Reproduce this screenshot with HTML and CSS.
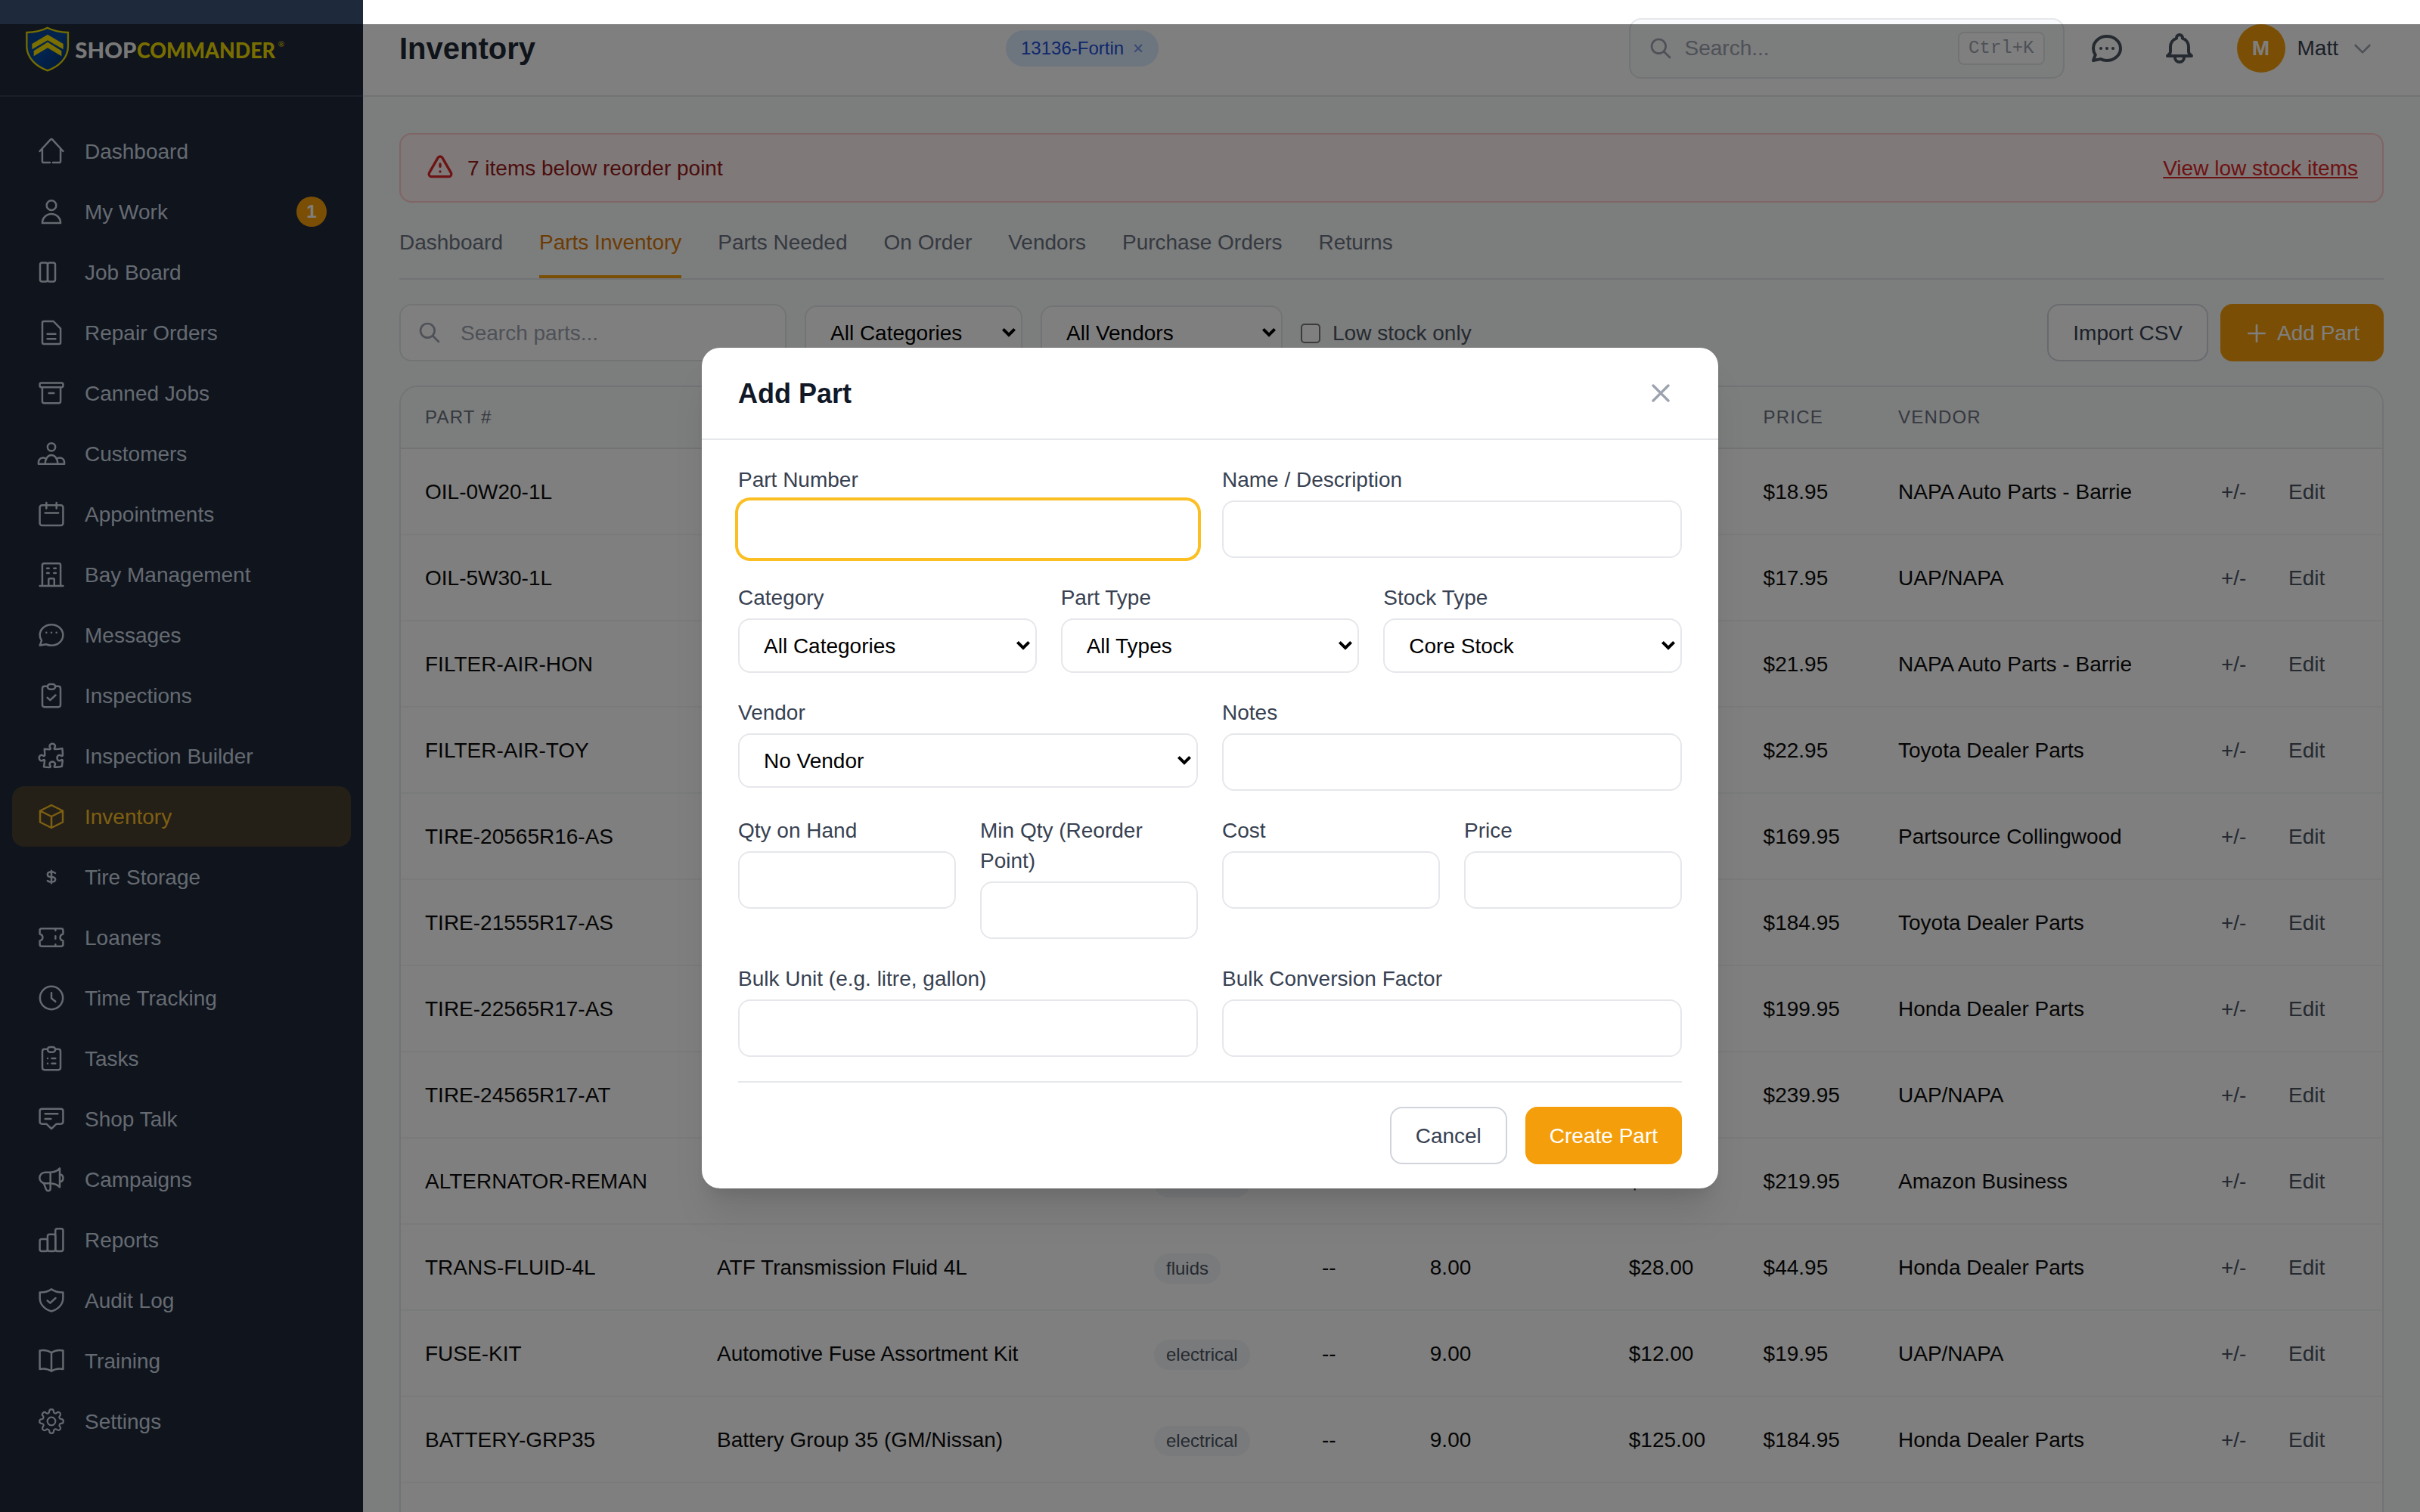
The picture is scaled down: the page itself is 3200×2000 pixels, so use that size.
FILE: index.html
```html
<!DOCTYPE html>
<html lang="en">
<head>
    <meta charset="UTF-8">
    <meta name="viewport" content="width=device-width, initial-scale=1.0">
    <title>Inventory - ShopCommander</title>
    <link rel="stylesheet" href="styles.css">
</head>
<body>
    <div class="app">
        <aside class="sidebar">
            <div class="brand">
                <svg class="brand__logo" viewBox="36 0 1044 252">
                    <defs>
                        <linearGradient id="shield" x1="0" y1="0" x2="1" y2="1">
                            <stop offset="0" stop-color="#0a3f8f"/>
                            <stop offset="0.5" stop-color="#04489f"/>
                            <stop offset="1" stop-color="#052b63"/>
                        </linearGradient>
                    </defs>
                    <path d="M128 38C104 51 76 56 46 57V112C46 158 84 192 129 208C174 192 210 158 210 112V57C180 56 152 51 128 38Z" fill="url(#shield)" stroke="#e8d800" stroke-width="7"/>
                    <path d="M129 65L191 102V124L129 88L67 124V102Z" fill="#f5df00"/>
                    <path d="M129 95L184 130V151L129 118L74 151V130Z" fill="#f5df00"/>
                    <text class="brand__shop" x="238" y="158" textLength="243" lengthAdjust="spacingAndGlyphs">SHOP</text>
                    <text class="brand__commander" x="483" y="158" textLength="549" lengthAdjust="spacingAndGlyphs">COMMANDER</text>
                    <text class="brand__reg" x="1043" y="115">®</text>
                </svg>
            </div>
            <nav class="nav">
                <a class="nav__item"><svg class="icon" viewBox="0 0 24 24"><path d="M2.75 12l8.5-9.2c.4-.45 1.1-.45 1.5 0l8.5 9.2M4.75 10v9.9c0 .6.5 1.1 1.1 1.1H10.8m2.4 0h4.95c.6 0 1.1-.5 1.1-1.1V10"/></svg>Dashboard</a>
                <a class="nav__item"><svg class="icon" viewBox="0 0 24 24"><circle cx="12" cy="7" r="3.8"/><path d="M4.75 21c0-4 3.2-7.2 7.25-7.2s7.25 3.2 7.25 7.2z"/></svg>My Work<span class="nav__badge">1</span></a>
                <a class="nav__item"><svg class="icon" viewBox="0 0 24 24"><rect x="3" y="4.5" width="6" height="15" rx="1.6"/><rect x="9" y="4.5" width="6" height="15" rx="1.6"/></svg>Job Board</a>
                <a class="nav__item"><svg class="icon" viewBox="0 0 24 24"><path d="M6 3h7.6l5.65 5.8v11c0 .7-.5 1.2-1.2 1.2H6c-.7 0-1.2-.5-1.2-1.2V4.2C4.8 3.5 5.3 3 6 3zM8.75 13h6.5m-6.5 3.9h6.5"/></svg>Repair Orders</a>
                <a class="nav__item"><svg class="icon" viewBox="0 0 24 24"><rect x="2.75" y="3.9" width="18.5" height="3.4" rx="1.1"/><path d="M4.75 7.3v11.2c0 .9.6 1.5 1.5 1.5h11.5c.9 0 1.5-.6 1.5-1.5V7.3M10 12h4"/></svg>Canned Jobs</a>
                <a class="nav__item"><svg class="icon" viewBox="0 0 24 24"><circle cx="12" cy="6.8" r="3.1"/><path d="M7 20.25c0-4 2-7 5-7s5 3 5 7M1.75 20.25v-1.2c0-2.3 1.7-3.8 3.7-3.8.9 0 1.6.2 2.3.8M22.25 20.25v-1.2c0-2.3-1.7-3.8-3.7-3.8-.9 0-1.6.2-2.3.8M1.75 20.25h20.5"/></svg>Customers</a>
                <a class="nav__item"><svg class="icon" viewBox="0 0 24 24"><rect x="2.75" y="5" width="18.5" height="16" rx="1.8"/><path d="M8 3v4.5M16 3v4.5M7 11.1h10.5"/></svg>Appointments</a>
                <a class="nav__item"><svg class="icon" viewBox="0 0 24 24"><path d="M2.75 21h18.5M4.75 21V4.6c0-.8.6-1.4 1.4-1.4h11.7c.8 0 1.4.6 1.4 1.4V21M9.75 21v-5.1c0-.4.3-.8.8-.8h2.9c.5 0 .8.4.8.8V21M8.5 7.1h1.5m4 0h1.5m-7 3.7h1.5m4 0h1.5"/></svg>Bay Management</a>
                <a class="nav__item"><svg class="icon" viewBox="0 0 24 24"><path d="M8 10h.01M12 10h.01M16 10h.01M21.2 12c0 4.6-4.1 8.3-9.2 8.3a9.863 9.863 0 01-4.255-.949L2.8 20.3l1.395-3.9C3.3 15.1 2.8 13.6 2.8 12c0-4.6 4.1-8.3 9.2-8.3s9.2 3.7 9.2 8.3z"/></svg>Messages</a>
                <a class="nav__item"><svg class="icon" viewBox="0 0 24 24"><path d="M9 4.7H6.5c-1 0-1.7.7-1.7 1.7v13c0 1 .7 1.7 1.7 1.7h11c1 0 1.7-.7 1.7-1.7v-13c0-1-.7-1.7-1.7-1.7H15"/><rect x="8.9" y="3" width="6.2" height="4" rx="2"/><path d="M8.8 13.7l2.2 2 4.3-4"/></svg>Inspections</a>
                <a class="nav__item"><svg class="icon" viewBox="0 0 24 24"><path d="M14.25 6.087c0-.355.186-.676.401-.959.221-.29.349-.634.349-1.003 0-1.036-1.007-1.875-2.25-1.875s-2.25.84-2.25 1.875c0 .369.128.713.349 1.003.215.283.401.604.401.959v0a.64.64 0 0 1-.657.643 48.39 48.39 0 0 1-4.163-.3c.186 1.613.293 3.25.315 4.907a.656.656 0 0 1-.658.663v0c-.355 0-.676-.186-.959-.401a1.647 1.647 0 0 0-1.003-.349c-1.036 0-1.875 1.007-1.875 2.25s.84 2.25 1.875 2.25c.369 0 .713-.128 1.003-.349.283-.215.604-.401.959-.401v0c.31 0 .555.26.532.57a48.039 48.039 0 0 1-.642 5.056c1.518.19 3.058.309 4.616.354a.64.64 0 0 0 .657-.643v0c0-.355-.186-.676-.401-.959a1.647 1.647 0 0 1-.349-1.003c0-1.035 1.008-1.875 2.25-1.875 1.243 0 2.25.84 2.25 1.875 0 .369-.128.713-.349 1.003-.215.283-.4.604-.4.959v0c0 .333.277.599.61.58a48.1 48.1 0 0 0 5.427-.63 48.05 48.05 0 0 0 .582-4.717.532.532 0 0 0-.533-.57v0c-.355 0-.676.186-.959.401-.29.221-.634.349-1.003.349-1.035 0-1.875-1.007-1.875-2.25s.84-2.25 1.875-2.25c.37 0 .713.128 1.003.349.283.215.604.401.96.401v0a.656.656 0 0 0 .658-.663 48.422 48.422 0 0 0-.37-5.36c-1.886.342-3.81.574-5.766.689a.578.578 0 0 1-.61-.58v0Z"/></svg>Inspection Builder</a>
                <a class="nav__item active"><svg class="icon" viewBox="0 0 24 24"><path d="m21 7.5-9-4.5L3 7.5m18 0-9 4.5m9-4.5v9L12 21M3 7.5l9 4.5M3 7.5v9l9 4.5m0-9v9"/></svg>Inventory</a>
                <a class="nav__item"><svg class="icon" viewBox="0 0 24 24"><path d="M12 7v10M15 8.9c-.7-.6-1.8-.9-3-.9-1.8 0-3.1.8-3.1 2s1.3 2 3.1 2 3.1.8 3.1 2-1.3 2-3.1 2c-1.2 0-2.4-.4-3.1-1"/></svg>Tire Storage</a>
                <a class="nav__item"><svg class="icon" viewBox="0 0 24 24"><path d="M15.2 5v1.5m0 4.5v2m0 4.5V19M4.2 5c-.8 0-1.45.6-1.45 1.4v2.9c1.5.4 2.3 1.4 2.3 2.7s-.8 2.3-2.3 2.7v2.9c0 .8.65 1.4 1.45 1.4h15.6c.8 0 1.45-.6 1.45-1.4v-2.9c-1.5-.4-2.3-1.4-2.3-2.7s.8-2.3 2.3-2.7V6.4c0-.8-.65-1.4-1.45-1.4z"/></svg>Loaners</a>
                <a class="nav__item"><svg class="icon" viewBox="0 0 24 24"><circle cx="12" cy="12" r="9.1"/><path d="M12 8v4.3l3.2 2.6"/></svg>Time Tracking</a>
                <a class="nav__item"><svg class="icon" viewBox="0 0 24 24"><path d="M9 4.7H6.5c-1 0-1.7.7-1.7 1.7v13c0 1 .7 1.7 1.7 1.7h11c1 0 1.7-.7 1.7-1.7v-13c0-1-.7-1.7-1.7-1.7H15"/><rect x="8.9" y="3" width="6.2" height="4" rx="2"/><path d="M9 12h.01M12.3 12h2.9M9 16.1h.01M12.3 16.1h2.9"/></svg>Tasks</a>
                <a class="nav__item"><svg class="icon" viewBox="0 0 24 24"><path d="M8 16H4.6c-1.1 0-1.85-.7-1.85-1.7V5.7C2.75 4.6 3.5 4 4.6 4h14.8c1.1 0 1.85.6 1.85 1.7v8.6c0 1-.75 1.7-1.85 1.7H16l-4 3.8zM7 8h10M7 12h4.6"/></svg>Shop Talk</a>
                <a class="nav__item"><svg class="icon" viewBox="0 0 24 24"><path d="M11.2 6.4H7a4.2 4.2 0 0 0 0 8.8h4.2zM11.2 6.4c2.9-.1 5.4-1 7.4-3.2v15c-2-2-4.5-2.9-7.4-3M18.6 7.9c1.5.2 2.7 1.4 2.7 3.1s-1.2 2.9-2.7 3.1M5.9 15.2l1.9 4.7c.4.9.9 1.2 1.7 1.2 1.1 0 1.7-.6 1.7-1.7v-4.2"/></svg>Campaigns</a>
                <a class="nav__item"><svg class="icon" viewBox="0 0 24 24"><rect x="2.75" y="11.4" width="6.2" height="9.6" rx="1.5"/><rect x="8.95" y="7.7" width="6.2" height="13.3" rx="1.5"/><rect x="15.15" y="3.1" width="6.1" height="17.9" rx="1.5"/></svg>Reports</a>
                <a class="nav__item"><svg class="icon" viewBox="0 0 24 24"><path d="M12 3.1c2.2 1.7 5.3 2.7 9.2 2.6v4.6c0 4.9-3.9 9-9.2 10.4-5.3-1.4-9.2-5.5-9.2-10.4V5.7c3.9.1 7-.9 9.2-2.6zM8.8 12.2l2.2 2 4.3-4"/></svg>Audit Log</a>
                <a class="nav__item"><svg class="icon" viewBox="0 0 24 24"><path d="M12 5.6C9 3.5 6 3.2 2.75 3.9v14.7C6 17.9 9 18.2 12 20.3M12 5.6c3-2.1 6-2.4 9.25-1.7v14.7c-3.25-.7-6.25-.4-9.25 1.7M12 5.6v14.7"/></svg>Training</a>
                <a class="nav__item"><svg class="icon" viewBox="-1.9 -1.9 27.8 27.8"><circle cx="12" cy="12" r="3.7"/><path d="M19.4 15a1.65 1.65 0 0 0 .33 1.82l.06.06a2 2 0 1 1-2.83 2.83l-.06-.06a1.65 1.65 0 0 0-1.82-.33 1.65 1.65 0 0 0-1 1.51V21a2 2 0 0 1-4 0v-.09A1.65 1.65 0 0 0 9 19.4a1.65 1.65 0 0 0-1.82.33l-.06.06a2 2 0 1 1-2.83-2.83l.06-.06a1.65 1.65 0 0 0 .33-1.82 1.65 1.65 0 0 0-1.51-1H3a2 2 0 0 1 0-4h.09A1.65 1.65 0 0 0 4.6 9a1.65 1.65 0 0 0-.33-1.82l-.06-.06a2 2 0 1 1 2.83-2.83l.06.06a1.65 1.65 0 0 0 1.82.33H9a1.65 1.65 0 0 0 1-1.51V3a2 2 0 0 1 4 0v.09a1.65 1.65 0 0 0 1 1.51 1.65 1.65 0 0 0 1.82-.33l.06-.06a2 2 0 1 1 2.83 2.83l-.06.06a1.65 1.65 0 0 0-.33 1.82V9a1.65 1.65 0 0 0 1.51 1H21a2 2 0 0 1 0 4h-.09a1.65 1.65 0 0 0-1.51 1z"/></svg>Settings</a>
            </nav>
        </aside>

        <div class="page">
            <header class="topbar">
                <h1 class="topbar__title">Inventory</h1>
                <span class="chip">13136-Fortin <span class="chip__close">×</span></span>
                <div class="topbar__right">
                    <div class="search">
                        <svg class="icon icon--sm" viewBox="0 0 24 24"><path d="M21 21l-6-6m2-5a7 7 0 11-14 0 7 7 0 0114 0z"/></svg>
                        <span>Search...</span>
                        <kbd>Ctrl+K</kbd>
                    </div>
                    <button class="icon-btn"><svg class="icon icon--lg" viewBox="0 0 24 24"><path d="M8 12h.01M12 12h.01M16 12h.01M21 12c0 4.418-4.03 8-9 8a9.863 9.863 0 01-4.255-.949L3 20l1.395-3.72C3.512 15.042 3 13.574 3 12c0-4.418 4.03-8 9-8s9 3.582 9 8z"/></svg></button>
                    <button class="icon-btn"><svg class="icon icon--lg" viewBox="0 0 24 24"><path d="M15 17h5l-1.405-1.405A2.032 2.032 0 0118 14.158V11a6.002 6.002 0 00-4-5.659V5a2 2 0 10-4 0v.341C7.67 6.165 6 8.388 6 11v3.159c0 .538-.214 1.055-.595 1.436L4 17h5m6 0v1a3 3 0 11-6 0v-1m6 0H9"/></svg></button>
                    <div class="user">
                        <span class="avatar">M</span>
                        <span>Matt</span>
                        <svg class="icon icon--sm" viewBox="0 0 24 24"><path d="M19 9l-7 7-7-7"/></svg>
                    </div>
                </div>
            </header>

            <main class="content">
                <div class="alert">
                    <svg class="icon icon--alert" viewBox="0 0 24 24"><path d="M12 9v2m0 4h.01m-6.938 4h13.856c1.54 0 2.502-1.667 1.732-3L13.732 4c-.77-1.333-2.694-1.333-3.464 0L3.34 16c-.77 1.333.192 3 1.732 3z"/></svg>
                    <span>7 items below reorder point</span>
                    <a class="alert__link">View low stock items</a>
                </div>

                <div class="tabs">
                    <a class="tab">Dashboard</a>
                    <a class="tab active">Parts Inventory</a>
                    <a class="tab">Parts Needed</a>
                    <a class="tab">On Order</a>
                    <a class="tab">Vendors</a>
                    <a class="tab">Purchase Orders</a>
                    <a class="tab">Returns</a>
                </div>

                <div class="toolbar">
                    <div class="toolbar__search">
                        <svg class="icon icon--sm" viewBox="0 0 24 24"><path d="M21 21l-6-6m2-5a7 7 0 11-14 0 7 7 0 0114 0z"/></svg>
                        <span>Search parts...</span>
                    </div>
                    <select class="select select--category"><option>All Categories</option></select>
                    <select class="select select--vendor"><option>All Vendors</option></select>
                    <label class="check"><input type="checkbox"> Low stock only</label>
                    <div class="toolbar__actions">
                        <button class="btn">Import CSV</button>
                        <button class="btn btn--primary"><svg class="icon icon--sm" viewBox="0 0 24 24"><path d="M12 4v16m8-8H4"/></svg>Add Part</button>
                    </div>
                </div>

                <div class="card">
                    <table class="table">
                        <colgroup>
                            <col class="col-part"><col class="col-name"><col class="col-cat"><col class="col-bin"><col class="col-qty">
                            <col class="col-cost"><col class="col-price"><col class="col-vendor"><col class="col-adjust"><col>
                        </colgroup>
                        <thead>
                            <tr><th>Part #</th><th>Name</th><th>Category</th><th>Bin</th><th>On Hand</th><th>Cost</th><th>Price</th><th>Vendor</th><th></th><th></th></tr>
                        </thead>
                        <tbody>
                            <tr><td>OIL-0W20-1L</td><td>Engine Oil 0W20 1L</td><td><span class="pill">fluids</span></td><td>--</td><td>24.00</td><td>$9.50</td><td>$18.95</td><td>NAPA Auto Parts - Barrie</td><td class="action">+/-</td><td class="action">Edit</td></tr>
                            <tr><td>OIL-5W30-1L</td><td>Engine Oil 5W30 1L</td><td><span class="pill">fluids</span></td><td>--</td><td>24.00</td><td>$8.95</td><td>$17.95</td><td>UAP/NAPA</td><td class="action">+/-</td><td class="action">Edit</td></tr>
                            <tr><td>FILTER-AIR-HON</td><td>Air Filter Honda</td><td><span class="pill">filters</span></td><td>--</td><td>6.00</td><td>$11.50</td><td>$21.95</td><td>NAPA Auto Parts - Barrie</td><td class="action">+/-</td><td class="action">Edit</td></tr>
                            <tr><td>FILTER-AIR-TOY</td><td>Air Filter Toyota</td><td><span class="pill">filters</span></td><td>--</td><td>6.00</td><td>$12.00</td><td>$22.95</td><td>Toyota Dealer Parts</td><td class="action">+/-</td><td class="action">Edit</td></tr>
                            <tr><td>TIRE-20565R16-AS</td><td>All Season 205/65R16</td><td><span class="pill">tires</span></td><td>--</td><td>8.00</td><td>$110.00</td><td>$169.95</td><td>Partsource Collingwood</td><td class="action">+/-</td><td class="action">Edit</td></tr>
                            <tr><td>TIRE-21555R17-AS</td><td>All Season 215/55R17</td><td><span class="pill">tires</span></td><td>--</td><td>8.00</td><td>$120.00</td><td>$184.95</td><td>Toyota Dealer Parts</td><td class="action">+/-</td><td class="action">Edit</td></tr>
                            <tr><td>TIRE-22565R17-AS</td><td>All Season 225/65R17</td><td><span class="pill">tires</span></td><td>--</td><td>8.00</td><td>$130.00</td><td>$199.95</td><td>Honda Dealer Parts</td><td class="action">+/-</td><td class="action">Edit</td></tr>
                            <tr><td>TIRE-24565R17-AT</td><td>All Terrain 245/65R17</td><td><span class="pill">tires</span></td><td>--</td><td>8.00</td><td>$160.00</td><td>$239.95</td><td>UAP/NAPA</td><td class="action">+/-</td><td class="action">Edit</td></tr>
                            <tr><td>ALTERNATOR-REMAN</td><td>Alternator Remanufactured</td><td><span class="pill">electrical</span></td><td>--</td><td>1.00<svg class="icon icon--low" viewBox="0 0 24 24"><path d="M12 9v2m0 4h.01m-6.938 4h13.856c1.54 0 2.502-1.667 1.732-3L13.732 4c-.77-1.333-2.694-1.333-3.464 0L3.34 16c-.77 1.333.192 3 1.732 3z"/></svg></td><td>$145.00</td><td>$219.95</td><td>Amazon Business</td><td class="action">+/-</td><td class="action">Edit</td></tr>
                            <tr><td>TRANS-FLUID-4L</td><td>ATF Transmission Fluid 4L</td><td><span class="pill">fluids</span></td><td>--</td><td>8.00</td><td>$28.00</td><td>$44.95</td><td>Honda Dealer Parts</td><td class="action">+/-</td><td class="action">Edit</td></tr>
                            <tr><td>FUSE-KIT</td><td>Automotive Fuse Assortment Kit</td><td><span class="pill">electrical</span></td><td>--</td><td>9.00</td><td>$12.00</td><td>$19.95</td><td>UAP/NAPA</td><td class="action">+/-</td><td class="action">Edit</td></tr>
                            <tr><td>BATTERY-GRP35</td><td>Battery Group 35 (GM/Nissan)</td><td><span class="pill">electrical</span></td><td>--</td><td>9.00</td><td>$125.00</td><td>$184.95</td><td>Honda Dealer Parts</td><td class="action">+/-</td><td class="action">Edit</td></tr>
                            <tr><td></td><td></td><td></td><td></td><td></td><td></td><td></td><td></td><td></td><td></td></tr>
                        </tbody>
                    </table>
                </div>
            </main>
        </div>
    </div>

    <div class="overlay">
        <div class="modal">
            <div class="modal__header">
                <h2>Add Part</h2>
                <button class="modal__close"><svg class="icon icon--close" viewBox="0 0 24 24"><path d="M6 18L18 6M6 6l12 12"/></svg></button>
            </div>
            <form class="modal__body">
                <div class="row row--2">
                    <div class="field"><label>Part Number</label><input class="input input--focus" type="text"></div>
                    <div class="field"><label>Name / Description</label><input class="input" type="text"></div>
                </div>
                <div class="row row--3">
                    <div class="field"><label>Category</label><select class="select"><option>All Categories</option></select></div>
                    <div class="field"><label>Part Type</label><select class="select"><option>All Types</option></select></div>
                    <div class="field"><label>Stock Type</label><select class="select"><option>Core Stock</option></select></div>
                </div>
                <div class="row row--2">
                    <div class="field"><label>Vendor</label><select class="select"><option>No Vendor</option></select></div>
                    <div class="field"><label>Notes</label><input class="input" type="text"></div>
                </div>
                <div class="row row--4">
                    <div class="field"><label>Qty on Hand</label><input class="input" type="text"></div>
                    <div class="field"><label>Min Qty (Reorder Point)</label><input class="input" type="text"></div>
                    <div class="field"><label>Cost</label><input class="input" type="text"></div>
                    <div class="field"><label>Price</label><input class="input" type="text"></div>
                </div>
                <div class="row row--2">
                    <div class="field"><label>Bulk Unit (e.g. litre, gallon)</label><input class="input" type="text"></div>
                    <div class="field"><label>Bulk Conversion Factor</label><input class="input" type="text"></div>
                </div>
                <div class="modal__footer">
                    <button class="btn" type="button">Cancel</button>
                    <button class="btn btn--primary" type="button">Create Part</button>
                </div>
            </form>
        </div>
    </div>
</body>
</html>
```

FILE: styles.css
```css
* {
    box-sizing: border-box;
}

/* everything is sized for a 1600x1000 screen */
html {
    zoom: 2;
}

body {
    position: relative;
    width: 1600px;
    height: 1000px;
    margin: 0;
    overflow: hidden;
    font-family: "Liberation Sans", Arial, sans-serif;
    font-size: 14px;
    line-height: 20px;
    color: #0a0a0a;
    background: #f9fafb;
}

button,
input,
select {
    font-family: inherit;
    font-size: 14px;
}

h1,
h2 {
    margin: 0;
}

.app {
    display: flex;
    height: 1000px;
    overflow: hidden;
}

.icon {
    width: 20px;
    height: 20px;
    flex-shrink: 0;
    fill: none;
    stroke: currentColor;
    stroke-width: 1.5;
    stroke-linecap: round;
    stroke-linejoin: round;
}

.icon--sm {
    width: 16px;
    height: 16px;
    stroke-width: 2;
}

.icon--lg {
    width: 24px;
    height: 24px;
    stroke-width: 2;
}

/* Sidebar */
.sidebar {
    width: 240px;
    flex-shrink: 0;
    background: #1e293b;
    color: #cbd5e1;
}

.brand {
    display: flex;
    align-items: center;
    height: 64px;
    padding: 3px 16px 0;
    border-bottom: 1px solid #334155;
}

.brand__logo {
    width: 174px;
    height: 42px;
}

.brand__shop,
.brand__commander {
    font-family: Lato, sans-serif;
    font-size: 88px;
    font-weight: 900;
    fill: #f1f1f1;
}

.brand__commander {
    fill: #f0dc00;
}

.brand__reg {
    font-family: Lato, sans-serif;
    font-size: 30px;
    fill: #f0dc00;
}

.nav {
    padding: 16px 8px;
}

.nav__item {
    display: flex;
    align-items: center;
    gap: 12px;
    height: 40px;
    padding: 1px 16px 0;
    border-radius: 8px;
}

.nav__item .icon {
    margin-top: -1px;
}

.nav__item.active {
    background: rgba(245, 158, 11, 0.2);
    color: #fbbf24;
}

.nav__badge {
    width: 20px;
    height: 20px;
    margin-top: -1px;
    margin-left: auto;
    border-radius: 50%;
    background: #f59e0b;
    color: #fff;
    font-size: 12px;
    font-weight: bold;
    text-align: center;
}

/* Top bar */
.page {
    flex: 1;
    min-width: 0;
}

.topbar {
    display: flex;
    align-items: center;
    height: 64px;
    padding: 1px 24px 0;
    background: #fff;
    border-bottom: 1px solid #e5e7eb;
}

.topbar__title {
    width: 401px;
    font-size: 20px;
    line-height: 28px;
    color: #1f2937;
}

.chip {
    display: flex;
    gap: 6px;
    height: 24px;
    padding: 4px 10px;
    border-radius: 12px;
    background: #dbeafe;
    color: #1d4ed8;
    font-size: 12px;
    line-height: 16px;
}

.chip__close {
    opacity: 0.6;
}

.topbar__right {
    display: flex;
    align-items: center;
    gap: 8px;
    margin-left: auto;
    color: #4b5563;
}

.search {
    display: flex;
    align-items: center;
    gap: 8px;
    width: 288px;
    height: 40px;
    padding: 0 12px;
    border: 1px solid #e5e7eb;
    border-radius: 8px;
    background: #f9fafb;
    color: #9ca3af;
}

.search kbd {
    margin-left: auto;
    padding: 2px 6px;
    border: 1px solid #e5e7eb;
    border-radius: 4px;
    background: #fff;
    font-family: "Liberation Mono", monospace;
    font-size: 12px;
    line-height: 16px;
}

.icon-btn {
    width: 40px;
    height: 40px;
    padding: 8px;
    border: 0;
    background: none;
    color: #4b5563;
}

.user {
    display: flex;
    align-items: center;
    gap: 8px;
    margin-left: 4px;
    padding: 0 6px;
    color: #374151;
}

.user .icon {
    color: #9ca3af;
}

.avatar {
    width: 32px;
    height: 32px;
    border-radius: 50%;
    background: #f59e0b;
    color: #fff;
    font-weight: bold;
    line-height: 32px;
    text-align: center;
}

/* Content */
.content {
    padding: 24px;
}

.alert {
    display: flex;
    align-items: center;
    gap: 8px;
    height: 46px;
    padding: 1px 16px 0;
    border: 1px solid #fecaca;
    border-radius: 8px;
    background: #fef2f2;
    color: #991b1b;
}

.icon--alert {
    margin-top: -1px;
    stroke-width: 2;
    color: #dc2626;
}

.alert__link {
    margin-left: auto;
    color: #dc2626;
    text-decoration: underline;
}

.tabs {
    display: flex;
    gap: 24px;
    margin-top: 16px;
    border-bottom: 1px solid #e5e7eb;
}

.tab {
    padding: 0.5px 0 11.5px;
    border-bottom: 2px solid transparent;
    color: #6b7280;
}

.tab.active {
    border-color: #f59e0b;
    color: #d97706;
}

.toolbar {
    display: flex;
    align-items: center;
    gap: 12px;
    margin: 16px 0;
}

.toolbar__search {
    display: flex;
    align-items: center;
    gap: 12.5px;
    width: 256px;
    height: 38px;
    padding: 1px 12px 0 11px;
    border: 1px solid #e5e7eb;
    border-radius: 8px;
    background: #fff;
    color: #9ca3af;
}

.toolbar__search .icon {
    margin-top: -1px;
}

.select {
    height: 36px;
    padding: 0 20px 0 16px;
    border: 1px solid #e5e7eb;
    border-radius: 8px;
    appearance: none;
    background: #fff url("data:image/svg+xml,%3Csvg xmlns='http://www.w3.org/2000/svg' viewBox='0 0 10 7'%3E%3Cpath d='M1.2 1.2L5 5l3.800-3.800' fill='none' stroke='black' stroke-width='2'/%3E%3C/svg%3E") no-repeat right 3px center / 10px 7px;
    color: #000;
}

.select--category {
    width: 144px;
}

.select--vendor {
    width: 160px;
}

.check {
    display: flex;
    align-items: center;
    gap: 8px;
    padding-top: 1px;
    color: #4b5563;
}

.check input {
    width: 13px;
    height: 13px;
    margin: 0;
}

.toolbar__actions {
    display: flex;
    gap: 8px;
    margin-left: auto;
}

.btn {
    display: flex;
    align-items: center;
    gap: 5.5px;
    height: 38px;
    padding: 1px 16px 0;
    border: 1px solid #d1d5db;
    border-radius: 8px;
    background: #fff;
    color: #374151;
}

.btn--primary {
    border: 0;
    background: #f59e0b;
    color: #fff;
}

.card {
    border: 1px solid #e5e7eb;
    border-radius: 12px;
    background: #fff;
    overflow: hidden;
}

.table {
    width: 100%;
    table-layout: fixed;
    border-collapse: separate;
    border-spacing: 0;
}

.col-part { width: 193px; }
.col-name { width: 289px; }
.col-cat { width: 111px; }
.col-bin { width: 71.4px; }
.col-qty { width: 131.5px; }
.col-cost { width: 88.9px; }
.col-price { width: 89.2px; }
.col-vendor { width: 213.5px; }
.col-adjust { width: 44.5px; }

.table th {
    height: 41px;
    padding: 0 16px;
    border-bottom: 1px solid #e5e7eb;
    background: #f9fafb;
    color: #6b7280;
    font-size: 12px;
    font-weight: normal;
    letter-spacing: 0.6px;
    text-align: left;
    text-transform: uppercase;
}

.table td {
    height: 57px;
    padding: 1px 16px 0;
    border-bottom: 1px solid #f3f4f6;
    white-space: nowrap;
}

.table td.action {
    color: #4b5563;
}

.pill {
    display: inline-block;
    padding: 2px 8px;
    border-radius: 10px;
    background: #f3f4f6;
    color: #4b5563;
    font-size: 12px;
    line-height: 16px;
}

.icon--low {
    width: 12px;
    height: 12px;
    margin-left: 4px;
    vertical-align: -2px;
    stroke-width: 2;
    color: #ef4444;
}

/* Modal */
.overlay {
    position: absolute;
    top: 16px;
    right: 0;
    bottom: 0;
    left: 0;
    display: flex;
    align-items: center;
    justify-content: center;
    background: rgba(0, 0, 0, 0.5);
}

.modal {
    width: 672px;
    border-radius: 12px;
    background: #fff;
    box-shadow: 0 20px 25px -5px rgba(0, 0, 0, 0.1), 0 8px 10px -6px rgba(0, 0, 0, 0.1);
}

.modal__header {
    display: flex;
    align-items: center;
    justify-content: space-between;
    height: 61px;
    padding: 0 24px;
    border-bottom: 1px solid #e5e7eb;
}

.modal__header h2 {
    padding-top: 1px;
    font-size: 18px;
    line-height: 28px;
    color: #111827;
}

.modal__close {
    height: 28px;
    padding: 4px;
    border: 0;
    background: none;
    color: #9ca3af;
}

.icon--close {
    stroke-width: 2;
}

.modal__body {
    display: flex;
    flex-direction: column;
    gap: 16px;
    padding: 16px 24px;
}

.row {
    display: grid;
    align-items: start;
    gap: 16px;
}

.row--2 { grid-template-columns: repeat(2, 1fr); }
.row--3 { grid-template-columns: repeat(3, 1fr); }
.row--4 { grid-template-columns: repeat(4, 1fr); }

.field {
    display: flex;
    flex-direction: column;
    gap: 3.5px;
    min-width: 0;
    color: #374151;
}

.field label {
    padding-top: 0.5px;
}

.input {
    width: 100%;
    height: 38px;
    padding: 0 12px;
    border: 1px solid #e5e7eb;
    border-radius: 8px;
    background: #fff;
    outline: none;
}

.input--focus {
    border-color: transparent;
    box-shadow: 0 0 0 2px #fbbf24;
}

.modal__footer {
    display: flex;
    justify-content: flex-end;
    gap: 12px;
    padding-top: 16px;
    border-top: 1px solid #e5e7eb;
}
```
